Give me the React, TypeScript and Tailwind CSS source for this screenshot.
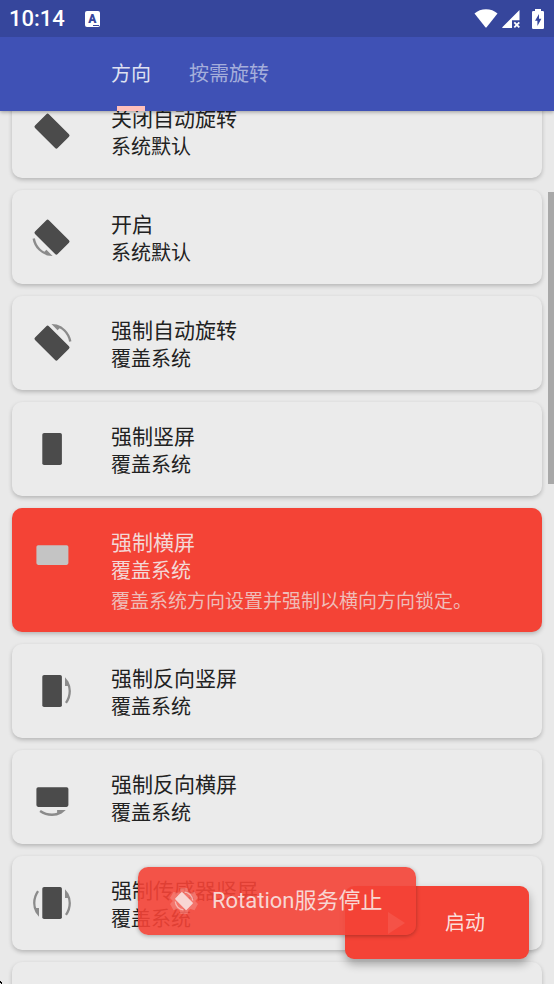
import React, { useState } from 'react'

type IconKind = 'tilted' | 'portrait' | 'landscape'

interface Orientation {
  title: string
  summary: string
  description?: string
  kind: IconKind
  // rotation in degrees of each arrow around the device
  arrows: number[]
}

const ORIENTATIONS: Orientation[] = [
  { title: '关闭自动旋转', summary: '系统默认', kind: 'tilted', arrows: [] },
  { title: '开启', summary: '系统默认', kind: 'tilted', arrows: [135] },
  { title: '强制自动旋转', summary: '覆盖系统', kind: 'tilted', arrows: [-45] },
  { title: '强制竖屏', summary: '覆盖系统', kind: 'portrait', arrows: [] },
  {
    title: '强制横屏',
    summary: '覆盖系统',
    description: '覆盖系统方向设置并强制以横向方向锁定。',
    kind: 'landscape',
    arrows: [],
  },
  { title: '强制反向竖屏', summary: '覆盖系统', kind: 'portrait', arrows: [0] },
  { title: '强制反向横屏', summary: '覆盖系统', kind: 'landscape', arrows: [90] },
  { title: '强制传感器竖屏', summary: '覆盖系统', kind: 'portrait', arrows: [0, 180] },
  { title: '强制传感器横屏', summary: '覆盖系统', kind: 'landscape', arrows: [90, 270] },
]

const ANGLES: Record<IconKind, number> = { portrait: 0, landscape: 90, tilted: -45 }

function OrientationIcon({ kind, arrows }: { kind: IconKind; arrows: number[] }) {
  return (
    <svg viewBox="0 0 40 40" className="mt-1.5 size-10 shrink-0 overflow-visible" aria-hidden="true">
      <rect
        x="10.3"
        y="4"
        width="19.6"
        height="32"
        rx="1.8"
        fill="currentColor"
        transform={`rotate(${ANGLES[kind]} 20.2 20.2)`}
      />
      {arrows.map(angle => (
        <g key={angle} transform={`rotate(${angle} 20 20)`} opacity="0.6">
          <path
            d="M33 6.2L36.4 10.4Q38.900 15 38.900 20Q38.900 27 34.900 32.600L33 31.200Q36.600 26 36.600 20Q36.600 17.200 35.800 14.900H33z"
            fill="currentColor"
          />
        </g>
      ))}
    </svg>
  )
}

function StatusBar() {
  return (
    <div className="flex h-[37px] items-center bg-[#36469c] pl-[9px] pr-2.5 text-white">
      <span className="text-[22px] font-medium leading-7">10:14</span>
      <span className="relative ml-5 flex h-4 w-[15px] items-center justify-center rounded-[2px] bg-white text-xs font-black leading-4 text-[#36469c]">
        A
        <span className="absolute bottom-px right-px h-px w-1.5 bg-[#36469c]" />
      </span>

      <svg viewBox="0 0 24 19" className="ml-auto h-[19px] w-6" fill="currentColor" aria-hidden="true">
        <path d="M0.5 4.6C3.6 1.700 7.6 .3 12 .3S20.400 1.700 23.500 4.600L12.800 18Q12 19 11.200 18z" />
      </svg>
      <svg viewBox="0 0 18 18" className="ml-1 h-[18px] w-[18px]" fill="currentColor" aria-hidden="true">
        <path d="M17.500 0V10.300H10V18H0.500Q0 17.500 0.500 17z" />
        <path d="M12.300 12.300L17.300 17.300M17.300 12.300L12.300 17.300" stroke="currentColor" strokeWidth="1.800" />
      </svg>
      <svg viewBox="0 0 12 20" className="ml-3 h-5 w-3" fill="currentColor" aria-hidden="true">
        <path
          fillRule="evenodd"
          d="M3 0H9V2H10.800Q12 2 12 3.200V18.800Q12 20 10.800 20H1.200Q0 20 0 18.800V3.200Q0 2 1.200 2H3zM7 5L3 11.800H5.400V17L9.400 9.800H7z"
        />
      </svg>
    </div>
  )
}

export default function App() {
  const [tab, setTab] = useState(0)
  const [selected, setSelected] = useState(4)

  return (
    <div className="relative flex h-screen flex-col overflow-hidden bg-[#e9e9e9] font-[Roboto,'Noto_Sans_CJK_SC',sans-serif]">
      <header className="relative z-10 bg-[#3f51b5] shadow-[0_1px_4px_rgba(0,0,0,0.35)]">
        <StatusBar />
        <nav className="flex h-[74px] pl-[92px]">
          {['方向', '按需旋转'].map((label, i) => (
            <button
              key={label}
              onClick={() => setTab(i)}
              className={`relative px-[19px] text-[20px] leading-7 ${tab === i ? 'text-[#dfe1f1]' : 'text-[#a5aedb]'}`}
            >
              {label}
              {tab === i && (
                <span className="absolute bottom-0 left-1/2 h-[5px] w-7 -translate-x-1/2 bg-[#ffc0bb]" />
              )}
            </button>
          ))}
        </nav>
      </header>

      <main className="min-h-0 flex-1 overflow-hidden">
        {/* list is scrolled slightly under the tab bar */}
        <ul className="-mt-[27px] flex flex-col gap-3 px-3">
          {ORIENTATIONS.map((item, i) => {
            const active = selected === i
            return (
              <li key={item.title}>
                <button
                  onClick={() => setSelected(i)}
                  className={`flex w-full items-start gap-[39px] rounded-[10px] pb-[17px] pl-5 pr-5 pt-[21px] text-left shadow-[0_2px_4px_rgba(0,0,0,0.22)] ${
                    active ? 'bg-[#f44336] text-[#c4c4c4]' : 'bg-[#ebebeb] text-[#4b4b4b]'
                  }`}
                >
                  <OrientationIcon kind={item.kind} arrows={item.arrows} />
                  <span className={`flex flex-col ${active ? 'text-[#f3d8d6]' : 'text-[#212121]'}`}>
                    <span className="text-[21px] leading-7">{item.title}</span>
                    <span className="text-[20px] leading-7">{item.summary}</span>
                    {active && item.description && (
                      <span className="mt-1 text-[19px] leading-[26px] text-[#efbcb8]">{item.description}</span>
                    )}
                  </span>
                </button>
              </li>
            )
          })}
        </ul>
      </main>

      {/* Scroll thumb */}
      <div className="absolute right-0 top-48 h-[292px] w-1.5 bg-[#a8a8a8]" />

      <button className="absolute bottom-[25px] right-[25px] flex h-[73px] w-[184px] items-center rounded-[9px] bg-[#f44336] pl-[43px] text-[20px] leading-7 text-[#fbdedb] shadow-[0_5px_10px_rgba(0,0,0,0.32)]">
        <svg viewBox="0 0 17 22" className="h-[22px] w-[17px]" fill="currentColor" aria-hidden="true">
          <path d="M0 0L17 11L0 22z" />
        </svg>
        <span className="ml-10">启动</span>
      </button>

      {/* Toast */}
      <div
        role="status"
        className="absolute bottom-[49px] left-1/2 flex h-[68px] w-[278px] -translate-x-1/2 items-center rounded-[10px] bg-[#f44336]/90 pl-8 text-[#f8d6d3] shadow-[0_1px_4px_rgba(0,0,0,0.3)]"
      >
        <svg viewBox="0 0 28 28" className="size-7" fill="currentColor" aria-hidden="true">
          <path
            opacity="0.25"
            d="M10.500 1H17.500L18.500 4.800L20.500 6L24.500 4.800L28 11L25.200 14L28 17L24.500 23.200L20.500 22L18.500 23.200L17.500 27H10.500L9.500 23.200L7.500 22L3.500 23.200L0 17L2.800 14L0 11L3.500 4.800L7.500 6L9.500 4.800z"
          />
          <rect x="9" y="6" width="10" height="16" rx="0.800" transform="rotate(-45 14 14)" />
          <path
            d="M5.300 14.500A8.800 8.800 0 0 0 13.500 22.800M14.500 5.200A8.800 8.800 0 0 1 22.700 13.500"
            fill="none"
            stroke="currentColor"
            strokeWidth="1.300"
            opacity="0.7"
          />
        </svg>
        <span className="ml-3.5 whitespace-nowrap text-[22px] leading-7">Rotation服务停止</span>
      </div>

      {/* Corner mark */}
      <svg viewBox="0 0 2 3" className="absolute bottom-0 left-0 h-[3px] w-0.5" aria-hidden="true">
        <path d="M0 0H1V1H2V3H1V2H0z" fill="#000" />
      </svg>
    </div>
  )
}
